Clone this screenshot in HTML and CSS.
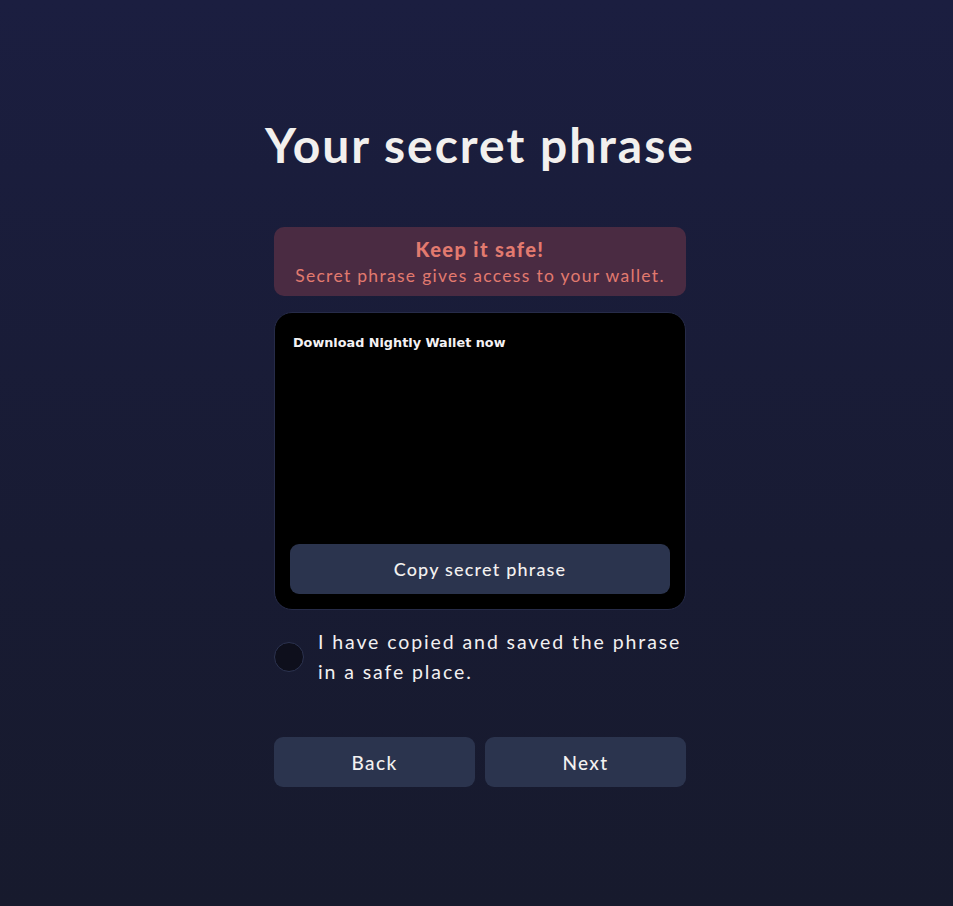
FILE: index.html
```html
<!DOCTYPE html>
<html lang="en">
<head>
    <meta charset="UTF-8">
    <meta name="viewport" content="width=device-width, initial-scale=1.0">
    <title>Your secret phrase</title>
    <link rel="stylesheet" href="styles.css">
</head>
<body>
    <div class="page">
        <h1 class="title">Your secret phrase</h1>

        <div class="column">
            <div class="alert">
                <div class="alert-title">Keep it safe!</div>
                <div class="alert-text">Secret phrase gives access to your wallet.</div>
            </div>

            <div class="phrase-box">
                <div class="phrase-label">Download Nightly Wallet now</div>
                <button class="button copy">Copy secret phrase</button>
            </div>

            <label class="confirm">
                <span class="radio"></span>
                <span class="confirm-text">I have copied and saved the phrase in a safe place.</span>
            </label>

            <div class="actions">
                <button class="button">Back</button>
                <button class="button">Next</button>
            </div>
        </div>
    </div>
</body>
</html>
```

FILE: styles.css
```css
html, body {
    height: 100%;
}
body {
    margin: 0;
    font-family: Lato, "Open Sans", sans-serif;
    background: linear-gradient(180deg, #1b1e40 0%, #181b33 60%, #171a2d 100%);
    color: #f2f0ef;
}
.page {
    display: flex;
    flex-direction: column;
    align-items: center;
    padding-top: 113px;
    padding-left: 7px;
}
.title {
    margin: 0;
    font-size: 48px;
    font-weight: 700;
    line-height: 64px;
    letter-spacing: 2px;
    color: #f2f0ee;
}
.column {
    width: 412px;
    margin-top: 50px;
    display: flex;
    flex-direction: column;
}
.alert {
    background: #4a2b42;
    border-radius: 10px;
    height: 69px;
    box-sizing: border-box;
    padding-top: 9px;
    text-align: center;
    color: #e27a6f;
}
.alert-title {
    font-size: 20px;
    font-weight: 900;
    line-height: 26px;
    letter-spacing: 1.4px;
}
.alert-text {
    margin-top: 2px;
    font-size: 17.5px;
    line-height: 24px;
    letter-spacing: 1.3px;
}
.phrase-box {
    margin-top: 16px;
    height: 298px;
    box-sizing: border-box;
    background: #000;
    border: 1px solid #262b48;
    border-radius: 18px;
    padding: 22px 15px 15px;
    display: flex;
    flex-direction: column;
    justify-content: space-between;
}
.phrase-label {
    padding-left: 3px;
    font-family: "DejaVu Sans", Verdana, sans-serif;
    font-weight: 700;
    font-size: 12.8px;
    color: #f4f2f4;
}
.button {
    height: 50px;
    border: none;
    border-radius: 9px;
    background: #2b344e;
    color: #f3f1f0;
    font-family: Lato, "Open Sans", sans-serif;
    font-size: 19px;
    font-weight: 500;
    letter-spacing: 1.4px;
    cursor: pointer;
}
.copy {
    font-size: 18px;
    letter-spacing: 1.2px;
}
.confirm {
    margin-top: 17px;
    display: flex;
    align-items: center;
    gap: 14px;
}
.radio {
    flex: none;
    width: 28px;
    height: 28px;
    border-radius: 50%;
    background: #0e0f1c;
    border: 1px solid #2c3350;
}
.confirm-text {
    font-size: 19.5px;
    line-height: 30px;
    letter-spacing: 1.9px;
    color: #f2f0f0;
}
.actions {
    margin-top: 50px;
    display: grid;
    grid-template-columns: 1fr 1fr;
    gap: 10px;
}
```
